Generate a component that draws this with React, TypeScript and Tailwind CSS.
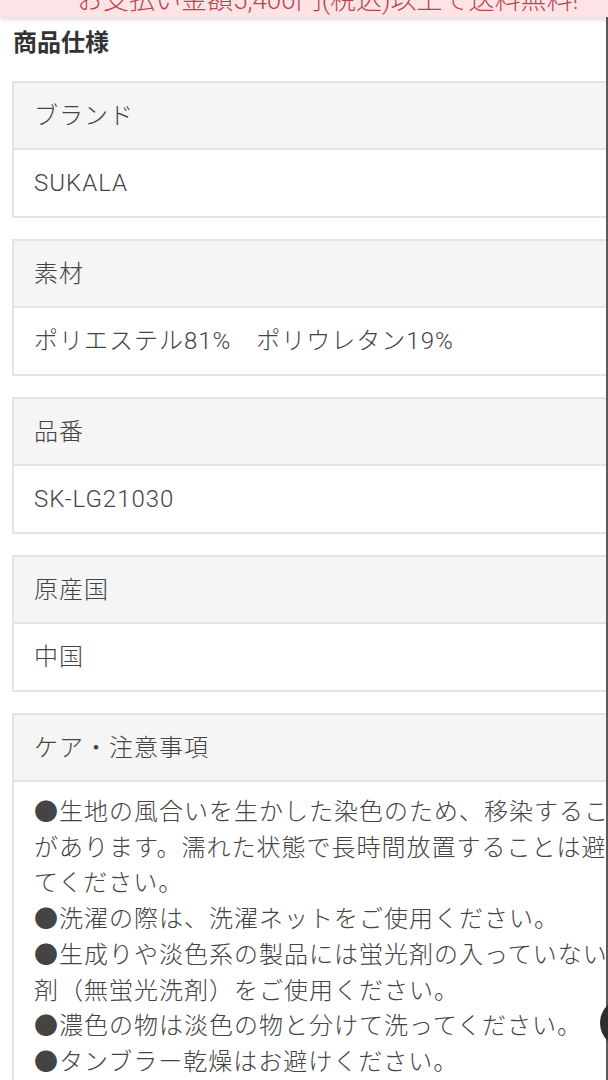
import React from "react";

const specs = [
  { label: "ブランド", value: "SUKALA" },
  { label: "素材", value: "ポリエステル81%　ポリウレタン19%" },
  { label: "品番", value: "SK-LG21030" },
  { label: "原産国", value: "中国" },
];

const careLines = [
  "●生地の風合いを生かした染色のため、移染すること",
  "があります。濡れた状態で長時間放置することは避け",
  "てください。",
  "●洗濯の際は、洗濯ネットをご使用ください。",
  "●生成りや淡色系の製品には蛍光剤の入っていない洗",
  "剤（無蛍光洗剤）をご使用ください。",
  "●濃色の物は淡色の物と分けて洗ってください。",
  "●タンブラー乾燥はお避けください。",
  "●アイロンは低温で当て布をしてください。",
];

function SpecTable({ label, children }: { label: string; children: React.ReactNode }) {
  return (
    <div className="w-[660px] border-2 border-[#e4e4e4] bg-white">
      <div className="h-[67px] flex items-center px-5 bg-[#f5f5f5] border-b-2 border-[#e4e4e4]">
        {label}
      </div>
      {children}
    </div>
  );
}

export default function App() {
  return (
    <div
      className="relative w-[608px] h-[1080px] overflow-hidden bg-white text-[#444] text-[24px] font-light tracking-[1px]"
      style={{ fontFamily: 'Roboto, "Noto Sans CJK JP", sans-serif' }}
    >
      {/* free shipping banner, scrolled mostly out of view */}
      <div className="relative z-10 h-[17px] overflow-hidden bg-[#fde3e6] shadow-[0_3px_4px_rgba(0,0,0,0.12)]">
        <p className="mt-[-14px] pl-[77px] whitespace-nowrap text-[26px] leading-[28px] tracking-normal text-[#b8434d]">
          お支払い金額5,400円(税込)以上で送料無料!
        </p>
      </div>

      <div className="pl-3">
        <h2 className="mt-[10px] mb-[22px] pl-px text-[24px] leading-[32px] font-bold tracking-normal text-[#333]">
          商品仕様
        </h2>

        <div className="flex flex-col gap-[21px]">
          {specs.map((s) => (
            <SpecTable key={s.label} label={s.label}>
              <div className="h-[66px] flex items-center px-5 whitespace-nowrap">{s.value}</div>
            </SpecTable>
          ))}

          <SpecTable label="ケア・注意事項">
            <div className="px-5 pt-[13px] pb-4 leading-[35.7px] whitespace-nowrap">
              {careLines.map((l) => (
                <div key={l}>{l}</div>
              ))}
            </div>
          </SpecTable>
        </div>
      </div>

      {/* screen edge + floating button peeking in */}
      <div className="absolute top-0 right-0 w-[2px] h-full bg-[#5a5a5a]" />
      <div className="absolute right-[-42px] top-[998px] w-[50px] h-[50px] rounded-full bg-[#2e2e2e]" />
    </div>
  );
}
